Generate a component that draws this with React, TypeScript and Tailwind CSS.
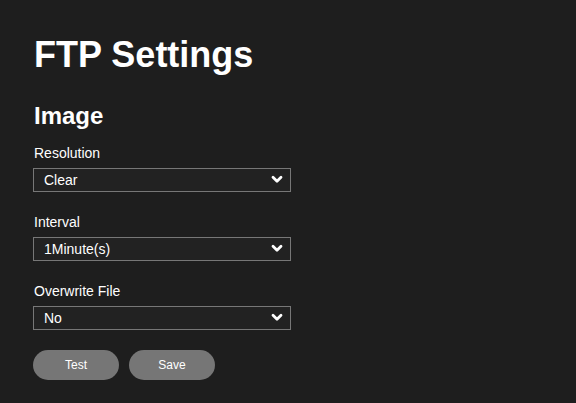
const fields = [
  { label: "Resolution", value: "Clear", options: ["Clear", "Fluent"] },
  { label: "Interval", value: "1Minute(s)", options: ["1Minute(s)", "5Minute(s)", "10Minute(s)"] },
  { label: "Overwrite File", value: "No", options: ["No", "Yes"] },
];

function Chevron() {
  return (
    <svg width="12" height="9" viewBox="0 0 12 9" className="pointer-events-none absolute right-[8px] top-[7px]">
      <polyline points="2,2.2 6,6.2 10,2.2" fill="none" stroke="#ffffff" strokeWidth="2.8" strokeLinecap="round" strokeLinejoin="round" />
    </svg>
  );
}

export default function App() {
  return (
    <main className="min-h-screen bg-[#1e1e1e] font-['Liberation_Sans',Arial,sans-serif] text-white">
      <div className="px-[34px] pt-[35px]">
        <h1 className="text-4xl leading-[40px] font-bold">FTP Settings</h1>
        <h2 className="mt-[25px] text-2xl leading-8 font-bold">Image</h2>

        <div className="mt-[11px] flex flex-col gap-5">
          {fields.map((field) => (
            <div key={field.label} className="flex flex-col gap-[5px]">
              <label className="text-sm leading-5">{field.label}</label>
              <div className="relative h-6 w-[258px] -ml-px">
                <select
                  defaultValue={field.value}
                  className="h-6 w-full appearance-none border border-[#777777] bg-[#222222] pl-[10px] text-sm leading-5 text-white outline-none"
                >
                  {field.options.map((opt) => (
                    <option key={opt} value={opt}>
                      {opt}
                    </option>
                  ))}
                </select>
                <Chevron />
              </div>
            </div>
          ))}
        </div>

        <div className="mt-5 -ml-px flex gap-[10px]">
          <button type="button" className="h-[30px] w-[86px] rounded-full bg-[#767676] text-xs text-white">
            Test
          </button>
          <button type="button" className="h-[30px] w-[86px] rounded-full bg-[#767676] text-xs text-white">
            Save
          </button>
        </div>
      </div>
    </main>
  );
}
